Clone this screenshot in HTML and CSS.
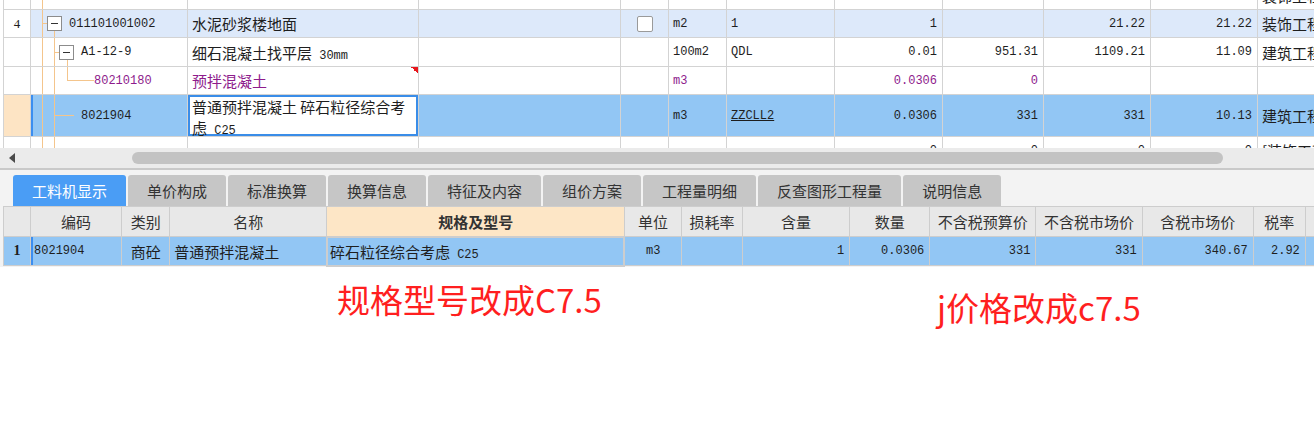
FILE: index.html
```html
<!DOCTYPE html>
<html lang="zh-CN">
<head>
    <meta charset="UTF-8">
    <meta name="viewport" content="width=device-width, initial-scale=1.0">
    <title>分部分项</title>
    <link rel="stylesheet" href="styles.css">
</head>
<body>

    <div class="top-grid">
        <table class="grid main">
            <colgroup>
                <col style="width:27px"><col style="width:157px"><col style="width:231px"><col style="width:202px">
                <col style="width:48px"><col style="width:58px"><col style="width:108px"><col style="width:108px">
                <col style="width:101px"><col style="width:107px"><col style="width:107px"><col style="width:120px">
            </colgroup>
            <tr class="cut">
                <td class="num"></td>
                <td class="tree t-cut"></td>
                <td></td><td></td><td></td><td></td><td></td><td></td><td></td><td></td><td></td>
                <td><span class="zh">装饰工程</span></td>
            </tr>
            <tr class="bill">
                <td class="num">4</td>
                <td class="tree t-bill"><div class="node lv0"><span class="tog"></span>011101001002</div></td>
                <td><span class="zh">水泥砂浆楼地面</span></td>
                <td></td>
                <td class="c"><span class="chk"></span></td>
                <td>m2</td>
                <td>1</td>
                <td class="r">1</td>
                <td class="r"></td>
                <td class="r">21.22</td>
                <td class="r">21.22</td>
                <td><span class="zh">装饰工程</span></td>
            </tr>
            <tr class="quota">
                <td class="num"></td>
                <td class="tree t-quota"><div class="node lv1"><span class="tog"></span>A1-12-9</div></td>
                <td><span class="zh">细石混凝土找平层</span> 30mm</td>
                <td></td>
                <td></td>
                <td>100m2</td>
                <td>QDL</td>
                <td class="r">0.01</td>
                <td class="r">951.31</td>
                <td class="r">1109.21</td>
                <td class="r">11.09</td>
                <td><span class="zh">建筑工程</span></td>
            </tr>
            <tr class="mat">
                <td class="num"></td>
                <td class="tree t-mat"><div class="node lv2">80210180</div></td>
                <td class="flag"><span class="zh">预拌混凝土</span></td>
                <td></td>
                <td></td>
                <td>m3</td>
                <td></td>
                <td class="r">0.0306</td>
                <td class="r">0</td>
                <td></td>
                <td></td>
                <td></td>
            </tr>
            <tr class="sel">
                <td class="num"></td>
                <td class="tree t-sel"><div class="node lv1b">8021904</div></td>
                <td class="edit-cell"><div class="editor"><span class="zh">普通预拌混凝土 碎石粒径综合考</span><br><span class="zh">虑</span> C25</div></td>
                <td></td>
                <td></td>
                <td>m3</td>
                <td><span class="ul">ZZCLL2</span></td>
                <td class="r">0.0306</td>
                <td class="r">331</td>
                <td class="r">331</td>
                <td class="r">10.13</td>
                <td><span class="zh">建筑工程</span></td>
            </tr>
            <tr class="cut">
                <td class="num"></td>
                <td class="tree t-end"></td>
                <td></td><td></td><td></td><td></td><td></td>
                <td class="r">0</td>
                <td class="r">0</td>
                <td class="r">0</td>
                <td class="r">0</td>
                <td><span class="zh">[装饰工程</span></td>
            </tr>
        </table>
    </div>

    <div class="hscroll">
        <span class="arrow"></span>
        <div class="thumb"></div>
    </div>

    <div class="panel">
        <div class="tabs">
            <div class="tab on">工料机显示</div>
            <div class="tab">单价构成</div>
            <div class="tab">标准换算</div>
            <div class="tab">换算信息</div>
            <div class="tab">特征及内容</div>
            <div class="tab">组价方案</div>
            <div class="tab">工程量明细</div>
            <div class="tab">反查图形工程量</div>
            <div class="tab">说明信息</div>
        </div>

        <table class="grid sub">
            <colgroup>
                <col style="width:27px"><col style="width:91px"><col style="width:48px"><col style="width:157px">
                <col style="width:297px"><col style="width:57px"><col style="width:61px"><col style="width:107px">
                <col style="width:80px"><col style="width:106px"><col style="width:106px"><col style="width:111px">
                <col style="width:52px"><col style="width:40px">
            </colgroup>
            <tr>
                <th></th>
                <th>编码</th>
                <th>类别</th>
                <th>名称</th>
                <th class="key">规格及型号</th>
                <th>单位</th>
                <th>损耗率</th>
                <th>含量</th>
                <th>数量</th>
                <th>不含税预算价</th>
                <th>不含税市场价</th>
                <th>含税市场价</th>
                <th>税率</th>
                <th></th>
            </tr>
            <tr class="sel">
                <td class="rn">1</td>
                <td class="code">8021904</td>
                <td class="c"><span class="zh">商砼</span></td>
                <td><span class="zh">普通预拌混凝土</span></td>
                <td class="edit"><span class="zh">碎石粒径综合考虑</span> C25</td>
                <td class="c">m3</td>
                <td></td>
                <td class="r">1</td>
                <td class="r">0.0306</td>
                <td class="r">331</td>
                <td class="r">331</td>
                <td class="r">340.67</td>
                <td class="r">2.92</td>
                <td></td>
            </tr>
        </table>
    </div>

    <div class="notes">
        <div class="note note-a">规格型号改成C7.5</div>
        <div class="note note-b">j价格改成c7.5</div>
    </div>

</body>
</html>
```

FILE: styles.css
```css
* {
    box-sizing: border-box;
}
body {
    margin: 0;
    background-color: #ffffff;
    color: #1e1e1e;
    font-family: "Liberation Mono", monospace;
    font-size: 12px;
}
.zh {
    font-family: "Noto Sans CJK SC", sans-serif;
    font-size: 15px;
}

/* shared grid */
.grid {
    border-collapse: collapse;
    table-layout: fixed;
}
.grid td, .grid th {
    border: 1px solid #d3d3d3;
    padding: 0 4px;
    white-space: nowrap;
    overflow: hidden;
    vertical-align: middle;
}
.grid .r {
    text-align: right;
    padding-right: 5px;
}
.grid .c {
    text-align: center;
}

/* upper grid */
.top-grid {
    height: 148px;
    overflow: hidden;
    padding-left: 3px;
}
.main {
    width: 1374px;
    margin-top: -19px;
}
.main tr {
    height: 28px;
}
.main tr.quota {
    height: 29px;
}
.main tr.sel {
    height: 42px;
}
.main tr.bill {
    background-color: #dde9fa;
}
.main tr.sel {
    background-color: #92c6f4;
}
.main tr.mat {
    color: #8e1b8c;
}
.main td.num {
    background-color: #ffffff;
    text-align: center;
    font-family: "Liberation Serif", serif;
    font-size: 13px;
    padding: 0;
}
.main tr.sel td.num {
    background-color: #fde4c4;
}
.ul {
    text-decoration: underline;
}

/* tree connector lines */
.tree {
    --tl: linear-gradient(#f4c58c, #f4c58c);
    padding: 0 !important;
    background-repeat: no-repeat;
}
.t-cut {
    background-image: var(--tl);
    background-size: 1px 100%;
    background-position: 11px 0;
}
.t-bill {
    background-image: var(--tl), var(--tl), var(--tl);
    background-size: 1px 100%, 5px 1px, 1px 50%;
    background-position: 11px 0, 11px 50%, 23px 100%;
}
.t-quota {
    background-image: var(--tl), var(--tl), var(--tl), var(--tl);
    background-size: 1px 100%, 1px 100%, 5px 1px, 1px 50%;
    background-position: 11px 0, 23px 0, 23px 50%, 36px 100%;
}
.t-mat {
    background-image: var(--tl), var(--tl), var(--tl), var(--tl);
    background-size: 1px 100%, 1px 100%, 1px 50%, 27px 1px;
    background-position: 11px 0, 23px 0, 36px 0, 36px 50%;
}
.t-sel {
    background-image: var(--tl), var(--tl), var(--tl);
    background-size: 1px 100%, 1px 100%, 20px 1px;
    background-position: 11px 0, 23px 0, 23px 50%;
    box-shadow: inset 2px 0 #3b8ef0;
}
.t-end {
    background-image: var(--tl), var(--tl);
    background-size: 1px 100%, 1px 100%;
    background-position: 11px 0, 23px 0;
}
.node {
    display: flex;
    align-items: center;
}
.lv0 { padding-left: 16px; }
.lv1 { padding-left: 28px; }
.lv2 { padding-left: 63px; }
.lv1b { padding-left: 50px; }
.tog {
    width: 15px;
    height: 15px;
    margin-right: 7px;
    border: 1px solid #8c8c8c;
    background-color: #ffffff;
    display: flex;
    align-items: center;
    justify-content: center;
}
.tog::before {
    content: "";
    width: 7px;
    height: 1px;
    background-color: #333333;
}
.chk {
    display: inline-block;
    width: 16px;
    height: 16px;
    border: 1px solid #9a9a9a;
    border-radius: 2px;
    background-color: #ffffff;
    vertical-align: middle;
}
.flag {
    background-image: linear-gradient(to bottom left, #e8161c 50%, transparent 50%);
    background-size: 7px 7px;
    background-position: right top;
    background-repeat: no-repeat;
}
.edit-cell {
    padding: 0 !important;
}
.editor {
    height: 41px;
    border: 2px solid #3a8de8;
    background-color: #ffffff;
    padding: 1px 2px;
    line-height: 17px;
    color: #1e1e1e;
}

/* scrollbar */
.hscroll {
    height: 22px;
    background-color: #ebebeb;
    border-bottom: 2px solid #c9c9c9;
    display: flex;
    align-items: center;
    padding-left: 9px;
}
.arrow {
    width: 0;
    height: 0;
    border-top: 5px solid transparent;
    border-bottom: 5px solid transparent;
    border-right: 6px solid #4a4a4a;
}
.thumb {
    margin-left: 117px;
    width: 1091px;
    height: 12px;
    border-radius: 6px;
    background-color: #c3c3c3;
}

/* lower panel */
.panel {
    background-color: #f3f3f3;
    padding-left: 3px;
}
.tabs {
    display: flex;
    gap: 2px;
    padding: 5px 0 0 10px;
}
.tab {
    height: 31px;
    padding: 0 19px;
    background-color: #c6c6c6;
    border-radius: 3px 3px 0 0;
    display: flex;
    align-items: center;
    font-family: "Noto Sans CJK SC", sans-serif;
    font-size: 15px;
    color: #333333;
}
.tab.on {
    background-color: #4a9df5;
    color: #ffffff;
}
.sub {
    width: 1343px;
}
.sub th {
    height: 30px;
    background-color: #e8e8e8;
    border-color: #cdcdcd;
    font-family: "Noto Sans CJK SC", sans-serif;
    font-size: 15px;
    font-weight: normal;
    color: #333333;
}
.sub th.key {
    background-color: #fde6c6;
    font-weight: bold;
}
.sub tr.sel td {
    height: 29px;
    background-color: #92c6f4;
    border-color: #cdcdcd;
}
.sub td.rn {
    background-color: #fde3c3;
    font-family: "Liberation Serif", serif;
    font-weight: bold;
    font-size: 14px;
    text-align: center;
    padding: 0;
}
.sub td.code {
    padding-left: 3px;
    box-shadow: inset 2px 0 #3b8ef0;
}
.sub td.edit {
    background-color: #ffffff;
    border: 2px solid #707070;
    padding-left: 2px;
}

/* annotations */
.notes {
    display: flex;
    padding-left: 337px;
    color: #ff1f1f;
    font-family: "Noto Sans CJK SC", sans-serif;
}
.note-a {
    width: 600px;
    font-size: 33px;
    margin-top: 8px;
}
.note-b {
    font-size: 33px;
    margin-top: 16px;
}
```
